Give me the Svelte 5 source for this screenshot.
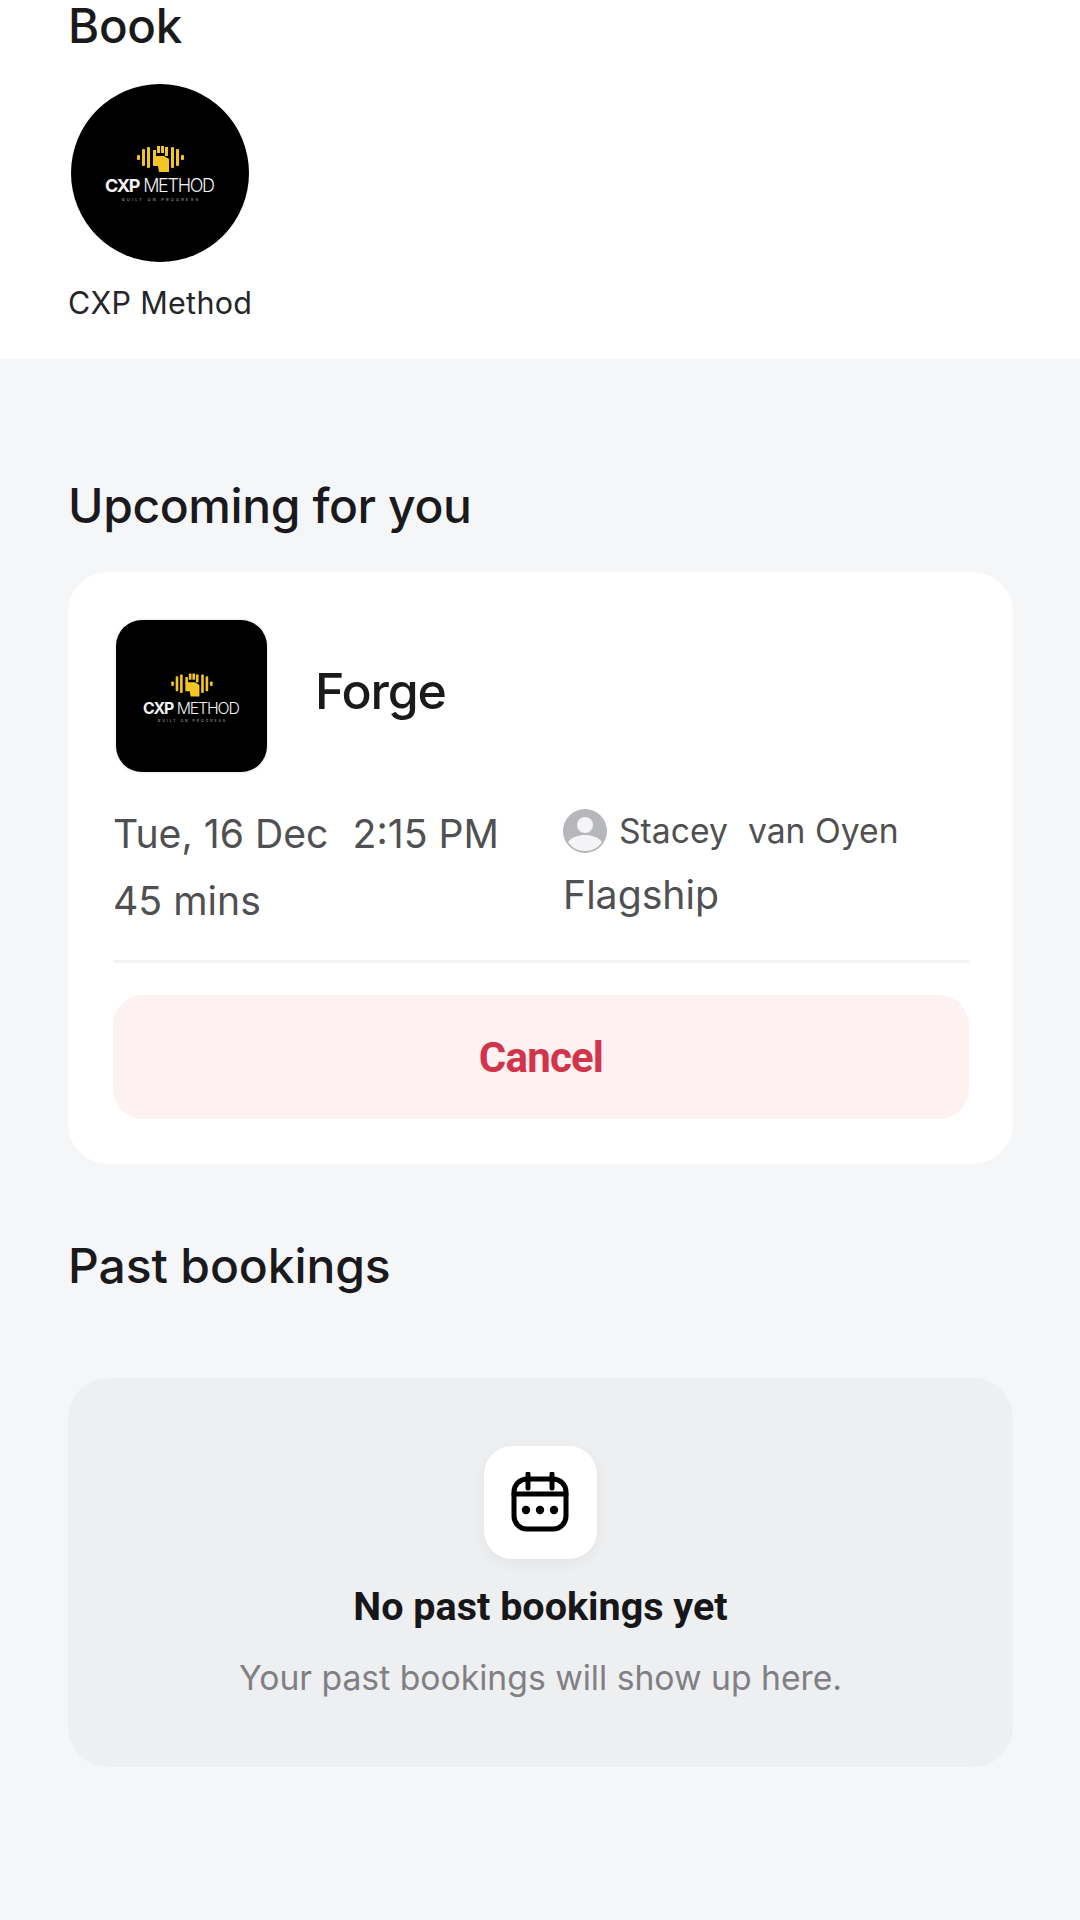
<script>
  const logoFull = "0 0 178 178";
  const logoThumb = "3.2 1.7 171.6 171.6";
</script>

{#snippet logo(viewBox)}
  <svg class="logo" {viewBox} aria-hidden="true">
    <g fill="#f3c623">
      <rect x="66" y="71" width="3" height="5" rx="1" />
      <rect x="71" y="65" width="3" height="17" rx="1" />
      <rect x="76" y="63" width="3" height="21" rx="1" />
      <rect x="82" y="66" width="3" height="8" />
      <rect x="86" y="62" width="3" height="7" />
      <rect x="90" y="62" width="3" height="7" />
      <rect x="94" y="63" width="3" height="9" />
      <path d="M82 72h11l5 3v13H88l-1-6h-5z" />
      <rect x="100" y="63" width="3" height="21" rx="1" />
      <rect x="105" y="65" width="3" height="17" rx="1" />
      <rect x="110" y="71" width="3" height="5" rx="1" />
    </g>
    <text class="mark" x="34" y="108" textLength="110"><tspan font-weight="700">CXP</tspan><tspan font-weight="300" dx="4"> METHOD</tspan></text>
    <text class="tag" x="51" y="117" textLength="76">BUILT ON PROGRESS</text>
  </svg>
{/snippet}

<div class="page">
  <section class="top">
    <h2 class="book">Book</h2>
    <div class="brand">
      <div class="circle">{@render logo(logoFull)}</div>
      <span>CXP Method</span>
    </div>
  </section>

  <section class="main">
    <h2 class="heading">Upcoming for you</h2>
    <div class="card">
      <div class="title-row">
        <div class="thumb">{@render logo(logoThumb)}</div>
        <span class="title">Forge</span>
      </div>
      <div class="meta">
        <div class="col">
          <div class="when"><span>Tue, 16 Dec</span><span>2:15 PM</span></div>
          <div class="duration">45 mins</div>
        </div>
        <div class="col">
          <div class="coach">
            <svg class="avatar" viewBox="0 0 44 44" aria-hidden="true">
              <circle cx="22" cy="22" r="22" fill="#b6b7bb" />
              <circle cx="22" cy="16" r="8" fill="#f4f4f6" />
              <path d="M5 33c4-5 10-7 17-7s13 2 17 7c-4 6-10 9-17 9S9 39 5 33z" fill="#f4f4f6" />
            </svg>
            <span class="name"><span>Stacey</span><span>van Oyen</span></span>
          </div>
          <div class="location">Flagship</div>
        </div>
      </div>
      <div class="divider"></div>
      <button class="cancel">Cancel</button>
    </div>

    <h2 class="heading past">Past bookings</h2>
    <div class="empty">
      <div class="icon-box">
        <svg viewBox="0 0 60 60" width="60" height="60" fill="none" stroke="#000" stroke-width="5" stroke-linecap="round" aria-hidden="true">
          <rect x="3" y="7" width="52" height="50" rx="13" />
          <path d="M3 22h52M17 2v14M41 2v14" />
          <g fill="#000" stroke="none">
            <circle cx="15" cy="38" r="4.2" />
            <circle cx="29" cy="38" r="4.2" />
            <circle cx="43" cy="38" r="4.2" />
          </g>
        </svg>
      </div>
      <div class="empty-title">No past bookings yet</div>
      <div class="empty-text">Your past bookings will show up here.</div>
    </div>
  </section>
</div>

<style>
  :global(body) {
    margin: 0;
    background: #f5f6f8;
  }

  .page {
    width: 1080px;
    min-height: 1920px;
    background: #f5f6f8;
    font-family: Inter, "Liberation Sans", sans-serif;
    color: #1a1a1c;
    overflow: hidden;
  }

  h2 {
    margin: 0;
    font-weight: 500;
  }

  .top {
    background: #fff;
    height: 359px;
    padding: 0 68px;
    box-sizing: border-box;
  }

  .book {
    font-size: 47.5px;
    line-height: 52px;
    letter-spacing: -0.3px;
  }

  .brand {
    display: flex;
    flex-direction: column;
    align-items: flex-start;
    margin-top: 32px;
    gap: 23px;
  }

  .brand span {
    font-size: 30.5px;
    line-height: 36px;
    color: #26262a;
    letter-spacing: 0.3px;
  }

  .circle {
    width: 178px;
    height: 178px;
    margin-left: 3px;
    border-radius: 50%;
    background: #000;
    overflow: hidden;
  }

  .logo {
    display: block;
    width: 100%;
    height: 100%;
  }

  .mark {
    font-size: 18px;
    fill: #f2f2f2;
  }

  .tag {
    font-size: 4px;
    fill: #b8b8b8;
  }

  .main {
    padding: 118px 67px 0 68px;
  }

  .heading {
    font-size: 48px;
    line-height: 58px;
    letter-spacing: -0.4px;
  }

  .card {
    margin-top: 37px;
    background: #fff;
    border-radius: 40px;
    height: 592px;
    padding: 48px 44px 0 45px;
    box-sizing: border-box;
  }

  .title-row {
    display: flex;
    align-items: center;
    gap: 48px;
    padding-left: 3px;
  }

  .thumb {
    width: 151px;
    height: 152px;
    border-radius: 26px;
    background: #000;
    overflow: hidden;
    box-shadow: 0 0 3px rgba(0, 0, 0, 0.15);
  }

  .title {
    font-size: 50px;
    line-height: 60px;
    font-weight: 500;
    letter-spacing: -1.2px;
    margin-top: -10px;
  }

  .meta {
    display: grid;
    grid-template-columns: 450px 1fr;
    margin-top: 35px;
    color: #505053;
    font-size: 39.2px;
  }

  .when {
    display: flex;
    gap: 24px;
    line-height: 54px;
    height: 54px;
  }

  .duration {
    margin-top: 13px;
    line-height: 54px;
  }

  .coach {
    display: flex;
    align-items: center;
    gap: 12px;
    height: 46px;
  }

  .avatar {
    width: 44px;
    height: 44px;
    flex: none;
    margin-top: 2px;
  }

  .name {
    display: flex;
    gap: 20px;
    font-size: 33.7px;
  }

  .location {
    margin-top: 15px;
    line-height: 54px;
  }

  .divider {
    height: 3px;
    background: #f3f3f5;
    margin-top: 32px;
  }

  .cancel {
    display: block;
    width: 100%;
    height: 124px;
    margin-top: 32px;
    border: none;
    border-radius: 30px;
    background: #fef1f1;
    color: #d1354b;
    font-family: Roboto, sans-serif;
    font-weight: 700;
    font-size: 42px;
    letter-spacing: -0.8px;
  }

  .past {
    margin-top: 73px;
    letter-spacing: -0.1px;
  }

  .empty {
    margin-top: 83px;
    height: 389px;
    box-sizing: border-box;
    background: #eeeff1;
    border-radius: 40px;
    padding-top: 68px;
    display: flex;
    flex-direction: column;
    align-items: center;
  }

  .icon-box {
    width: 113px;
    height: 113px;
    border-radius: 28px;
    background: #fff;
    display: flex;
    align-items: center;
    justify-content: center;
    box-shadow: 0 4px 14px rgba(0, 0, 0, 0.05);
  }

  .icon-box svg {
    margin-top: -2px;
  }

  .empty-title {
    margin-top: 24px;
    font-family: Roboto, sans-serif;
    font-weight: 700;
    font-size: 39.5px;
    line-height: 48px;
    color: #17171a;
  }

  .empty-text {
    margin-top: 25px;
    font-size: 33.7px;
    line-height: 44px;
    color: #808084;
  }
</style>
